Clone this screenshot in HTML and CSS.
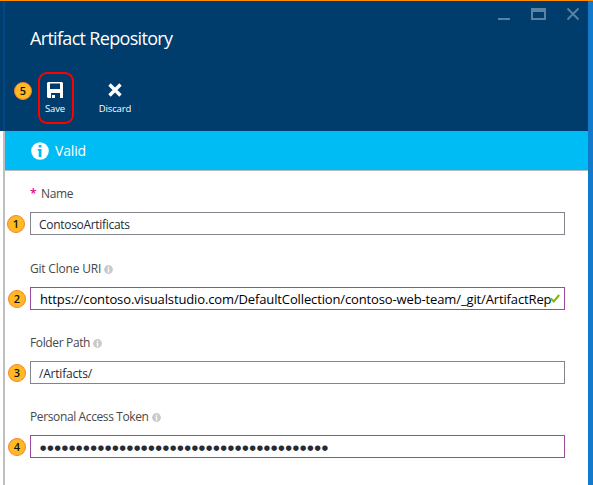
FILE: index.html
```html
<!DOCTYPE html>
<html lang="en">
<head>
<meta charset="utf-8">
<title>Artifact Repository</title>
<link rel="stylesheet" href="styles.css">
</head>
<body>
<svg class="defs" aria-hidden="true">
  <symbol id="info" viewBox="0 0 18 18"><circle cx="9" cy="9" r="8.8" fill="currentColor"/><path class="cut" d="M7.7 3h2.8v2.6H7.7zM6.8 7h3.7v8H7.7V8.7h-.9z"/></symbol>
</svg>
<div class="window">
  <div class="edge"></div>
  <main class="blade">
    <header class="header">
      <div class="controls">
        <svg width="78" height="14" viewBox="0 0 78 14"><path d="M0 11h12v2H0z"/><path fill-rule="evenodd" d="M33 1h15v12H33zM35 5v6h11V5z"/><path class="line" d="M69.5 1.5l11 11M80.5 1.5l-11 11"/></svg>
      </div>
      <h1 class="title">Artifact Repository</h1>
      <div class="toolbar">
        <span class="step step-save">5</span>
        <button class="command save"><svg width="16" height="16" viewBox="0 0 16 16"><path fill-rule="evenodd" d="M1 0h14l1 1v15h-3v-5H4v5H1l-1-1V1zM3 1.5V7h10V1.500z"/><path d="M5 13h3v3H5z"/></svg><span>Save</span></button>
        <button class="command discard"><svg width="16" height="16" viewBox="0 0 16 16"><path class="cross" d="M2.5 2.5l11 11M13.5 2.5l-11 11"/></svg><span>Discard</span></button>
      </div>
    </header>
    <div class="status"><svg width="18" height="18"><use href="#info"/></svg><span>Valid</span></div>
    <form class="form">
      <div class="field">
        <div class="label"><b>*</b><span class="t-name">Name</span></div>
        <div class="input"><span class="step first">1</span><span class="t-artifact">ContosoArtificats</span></div>
      </div>
      <div class="field">
        <div class="label"><span class="t-git">Git Clone URI</span><svg width="9" height="9"><use href="#info"/></svg></div>
        <div class="input changed"><span class="step second">2</span><span class="url">https://contoso.visualstudio.com/DefaultCollection/contoso-web-team/_git/ArtifactRep</span><svg class="check" width="10" height="9" viewBox="0 0 10 9"><path d="M.8 4.5L3.8 7.5L9.2 1"/></svg></div>
      </div>
      <div class="field">
        <div class="label"><span class="t-folder">Folder Path</span><svg width="9" height="9"><use href="#info"/></svg></div>
        <div class="input"><span class="step third">3</span><span class="t-path">/Artifacts/</span></div>
      </div>
      <div class="field">
        <div class="label"><span class="t-token">Personal Access Token</span><svg width="9" height="9"><use href="#info"/></svg></div>
        <div class="input changed"><span class="step fourth">4</span><span class="dots">●●●●●●●●●●●●●●●●●●●●●●●●●●●●●●●●●●●●●●●●</span></div>
      </div>
    </form>
  </main>
  <div class="desktop"></div>
</div>
</body>
</html>
```
FILE: styles.css
```css
* { box-sizing: border-box; }
body { margin: 0; font-family: "Open Sans", "Noto Sans", sans-serif; font-size: 12px; overflow: hidden; }
svg { display: block; flex: none; }
.defs { position: absolute; width: 0; height: 0; }
.window { height: 485px; border-top: 1px solid #ff8c00; display: grid; grid-template-columns: 5px 583px 5px; }
.edge { border-right: 2px solid #bfbfbf; background: #fff; }
.edge::before { content: ""; display: block; width: 5px; height: 130px; background: linear-gradient(90deg, #003c6c 3px, #004884 3px); }
.desktop { background: #1279cb; }
.blade { background: #fff; min-width: 0; }
.header { height: 130px; background: #003c6c; color: #fff; }
.controls { height: 25px; padding: 6px 0 0 493px; fill: #5c82a1; }
.controls svg { overflow: visible; }
.line { stroke: #5c82a1; stroke-width: 1.8; }
.title { margin: 0 0 0 25px; height: 46px; font-size: 18px; line-height: 25px; font-weight: 400; letter-spacing: -.68px; white-space: nowrap; }
.toolbar { display: flex; height: 52px; }
.step { width: 18px; height: 18px; flex: none; border: 1px solid #f58235; border-radius: 50%; background: #ffb923; color: #111; font-size: 11px; line-height: 16px; font-weight: 600; text-align: center; }
.step-save { margin: 10px 6px 0 9px; }
.command { border: 0; padding: 10px 0 0; margin: 0; background: none; color: #fff; font: 9.5px/13px "Open Sans", sans-serif; display: flex; flex-direction: column; align-items: center; gap: 4px; fill: #fff; }
.save { width: 36px; height: 52px; border: 2px solid #f00; border-radius: 9px; padding: 8px 2px 0 0; letter-spacing: -.1px; }
.discard { width: 40px; margin-left: 21px; letter-spacing: -.15px; }
.cross { stroke: #fff; stroke-width: 3.4; }
.status { height: 40px; background: #00bcf5; border-bottom: 1px solid #b5bcc0; color: #fff; display: flex; align-items: center; gap: 6px; padding-left: 26px; font-size: 14px; letter-spacing: -.15px; }
.status svg { --cut: #00bcf5; }
.cut { fill: var(--cut, #fff); }
.form { padding: 15px 23px 0 25px; }
.field { height: 74px; }
.field:first-child { height: 75px; }
.label { height: 26px; display: flex; align-items: flex-start; line-height: 15px; color: #484848; white-space: nowrap; }
.label svg { margin: 4px 0 0 3px; color: #c9c9c9; }
.label b { width: 11px; color: #ec008c; font-weight: 600; font-size: 12px; }
.t-name { letter-spacing: -.35px; }
.t-git { letter-spacing: -.2px; }
.t-folder { letter-spacing: -.36px; }
.t-token { letter-spacing: -.38px; }
.t-artifact { letter-spacing: -.3px; }
.t-path { letter-spacing: -.2px; }
.input { height: 23px; border: 1px solid #82858c; display: flex; align-items: center; padding-left: 8px; line-height: 21px; color: #252a33; white-space: nowrap; }
.input .t-artifact, .input .t-path, .input .url { padding-top: 2px; }
.changed { border-color: #9a4b9c; padding-left: 9px; }
.input .step { margin-right: 14px; margin-left: -32px; line-height: 16px; }
.input .third { margin-left: -31px; margin-right: 13px; }
.url { color: #000; font-size: 13px; letter-spacing: -.13px; }
.check { margin-left: -1px; fill: none; stroke: #7fba00; stroke-width: 2; }
.dots { font-family: "DejaVu Sans", sans-serif; font-size: 7.2px; letter-spacing: .95px; padding-top: 1px; }
```
